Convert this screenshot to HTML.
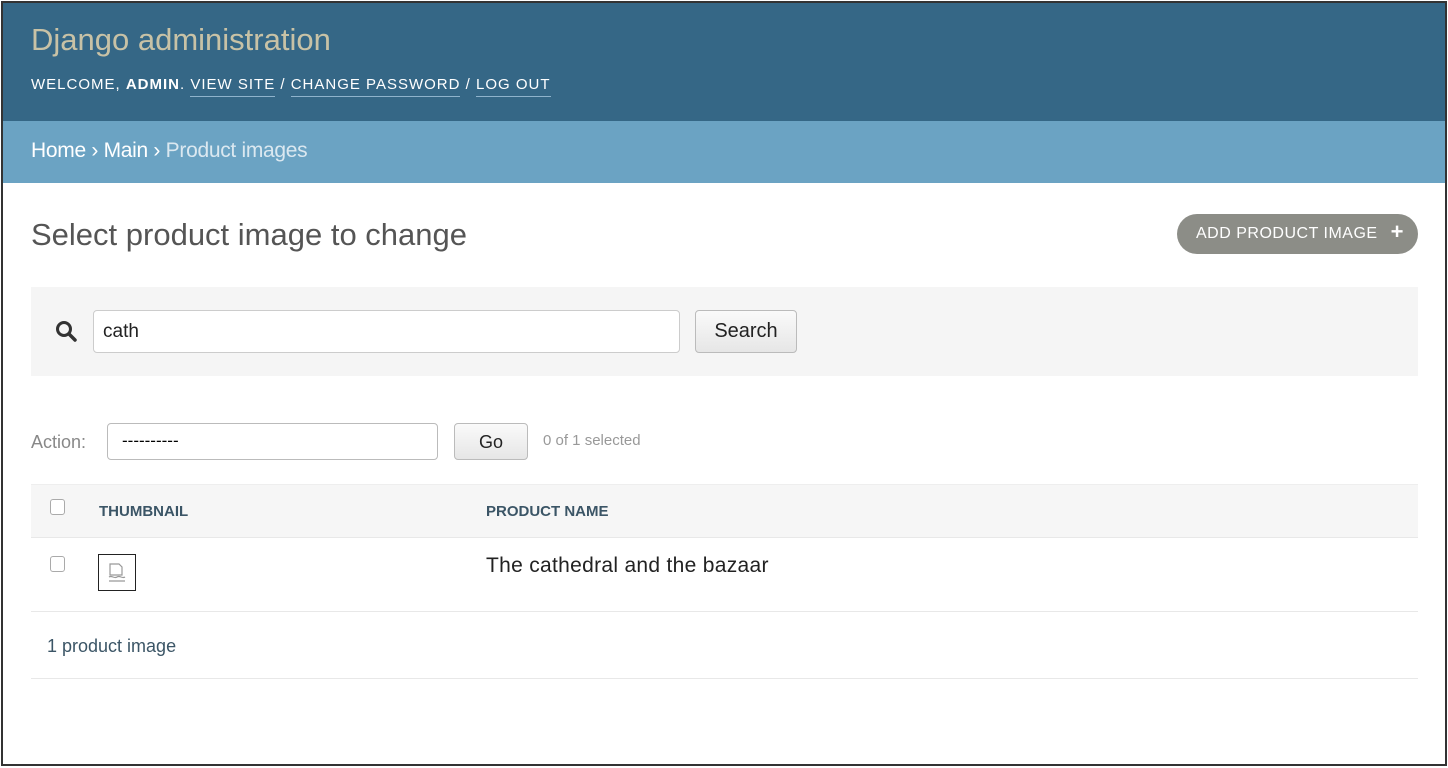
<!DOCTYPE html>
<html><head><style>
*{box-sizing:border-box;margin:0;padding:0}
body{width:1448px;height:768px;background:#fff;font-family:"Liberation Sans",sans-serif;position:relative;overflow:hidden}
.frame{position:absolute;left:1px;top:1px;width:1446px;height:765px;border:2px solid #333}
.hdr{position:absolute;left:3px;top:3px;width:1442px;height:118px;background:#356786}
.t{position:absolute;left:28px;top:19px;font-size:31px;color:#c8c2a6;font-weight:normal}
.u{position:absolute;left:28px;top:73px;font-size:15px;color:#fff;letter-spacing:1px}
.u a{color:#fff;border-bottom:1px solid #8fb3cc;padding-bottom:3px;text-decoration:none}
.bc{position:absolute;left:3px;top:121px;width:1442px;height:62px;background:#6ba3c3;}
.bc span{position:absolute;left:28px;top:18px;font-size:21px;color:#fff;letter-spacing:-.3px}
.bc .g{color:#dbe8f0}
h1{position:absolute;left:31px;top:217px;font-size:31px;font-weight:normal;color:#555}
.add{position:absolute;left:1177px;top:214px;width:241px;height:40px;border-radius:20px;background:#8c8d87;color:#fff;font-size:16px;letter-spacing:.5px;padding:11px 0 0 19px}
.sb{position:absolute;left:31px;top:287px;width:1387px;height:89px;background:#f5f5f5}
.inp{position:absolute;left:93px;top:310px;width:587px;height:43px;border:1px solid #ccc;border-radius:4px;background:#fff;font-size:19px;padding:10px 9px;color:#222}
.btn{position:absolute;border:1px solid #bbb;border-radius:4px;background:linear-gradient(#fafafa,#e6e6e6);color:#222;text-align:center}
.sm{font-size:17px;color:#888;position:absolute}
.th{position:absolute;left:31px;top:484px;width:1387px;height:54px;background:#f6f6f6;border-top:1px solid #eee;border-bottom:1px solid #e8e8e8}
.cb{position:absolute;width:15px;height:16px;border:1px solid #aaa;border-radius:3px;background:#fff}
.hl{position:absolute;font-size:15px;font-weight:bold;color:#3b5566;top:503px}
.line{position:absolute;left:31px;width:1387px;height:1px;background:#e8e8e8}
</style></head><body>
<div class="hdr"><div class="t">Django administration</div>
<div class="u">WELCOME, <b>ADMIN</b>. <a>VIEW SITE</a> / <a>CHANGE PASSWORD</a> / <a>LOG OUT</a></div></div>
<div class="bc"><span>Home › Main › <i class="g" style="font-style:normal">Product images</i></span></div>
<h1>Select product image to change</h1>
<div class="add">ADD PRODUCT IMAGE <b style="font-size:22px;position:absolute;right:14px;top:5px">+</b></div>
<div class="sb"></div>
<svg style="position:absolute;left:55px;top:320px" width="22" height="22" viewBox="0 0 22 22"><circle cx="9" cy="9" r="6.5" fill="none" stroke="#333" stroke-width="3"/><line x1="14" y1="14" x2="20" y2="20" stroke="#333" stroke-width="3.5" stroke-linecap="round"/></svg>
<div class="inp">cath</div>
<div class="btn" style="left:695px;top:310px;width:102px;height:43px;font-size:20px;padding-top:9px">Search</div>
<div class="sm" style="left:31px;top:432px;font-size:18px">Action:</div>
<div style="position:absolute;left:107px;top:423px;width:331px;height:37px;border:1px solid #bbb;border-radius:4px;background:#fff;font-size:17px;padding:7px 14px">----------</div>
<div class="btn" style="left:454px;top:423px;width:74px;height:37px;font-size:18px;padding-top:8px">Go</div>
<div class="sm" style="left:543px;top:432px;font-size:15px;color:#999">0 of 1 selected</div>
<div class="th"></div>
<div class="cb" style="left:50px;top:499px"></div>
<div class="hl" style="left:99px">THUMBNAIL</div>
<div class="hl" style="left:486px">PRODUCT NAME</div>
<div class="cb" style="left:50px;top:556px"></div>
<div style="position:absolute;left:98px;top:554px;width:38px;height:37px;border:1px solid #222;background:#fff"><svg width="36" height="35" viewBox="0 0 36 35"><path d="M11 9h9l3 3v8h-12z M10 22c3-2 5 2 8 0s5 2 8 0 M10 26h16" fill="none" stroke="#999" stroke-width="1.2"/></svg></div>
<div style="position:absolute;left:486px;top:554px;font-size:21px;color:#222;letter-spacing:.3px">The cathedral and the bazaar</div>
<div class="line" style="top:611px"></div>
<div style="position:absolute;left:47px;top:636px;font-size:18px;color:#3b5566">1 product image</div>
<div class="line" style="top:678px"></div>
<div class="frame"></div>
</body></html>
